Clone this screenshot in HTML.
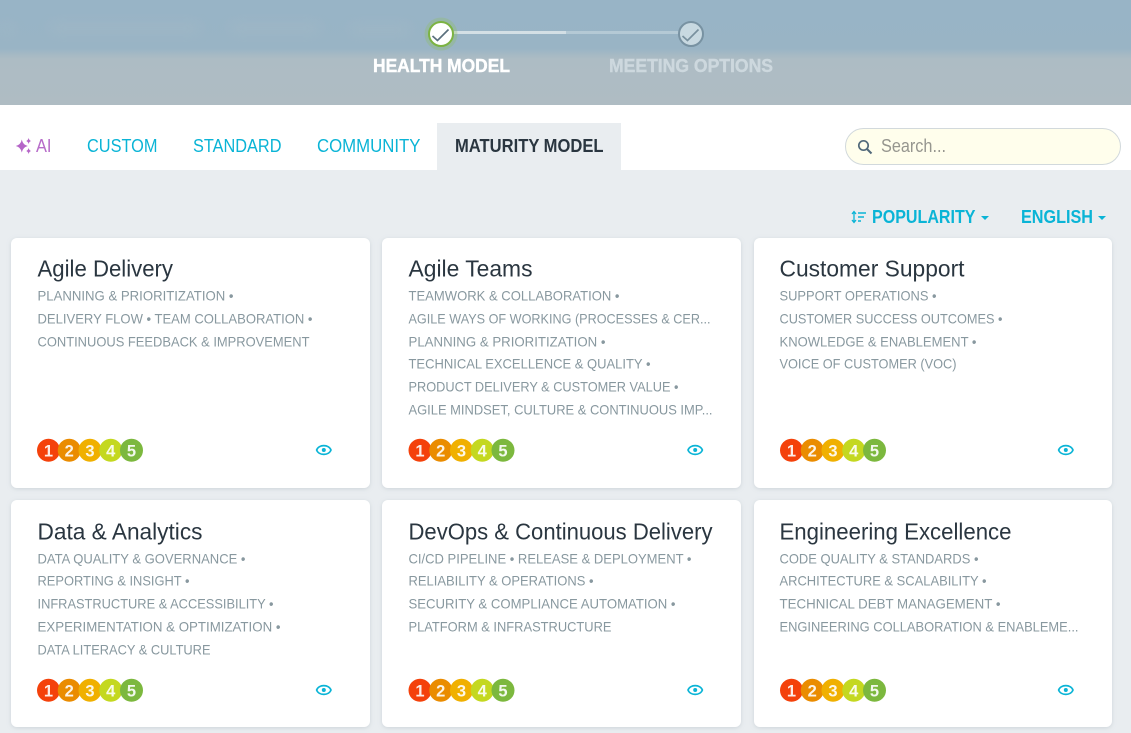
<!DOCTYPE html>
<html lang="en"><head><meta charset="utf-8"><title>Health Model</title>
<style>
html,body{margin:0;padding:0;background:#e9edf0;width:1131px;height:733px;overflow:hidden}
svg{display:block;font-family:"Liberation Sans",sans-serif}
.t{font-size:23.5px;fill:#2a3640}
.s{font-size:14px;fill:#88989f}
.n{font-size:16.5px;font-weight:bold;fill:#fff;text-anchor:middle;opacity:.9}
.c{fill:#0ab4d6}
.e{fill:none;stroke:#0ab4d6;stroke-width:1.7}
</style></head><body>
<svg width="1131" height="733" viewBox="0 0 1131 733" xmlns="http://www.w3.org/2000/svg">
<defs>
<linearGradient id="hg" x1="0" y1="0" x2="0" y2="1"><stop offset="0" stop-color="#98b4c6"/><stop offset=".46" stop-color="#99b4c5"/><stop offset=".56" stop-color="#adbcc4"/><stop offset="1" stop-color="#afbcc3"/></linearGradient>
<filter id="b" x="-10%" y="-100%" width="120%" height="300%"><feGaussianBlur stdDeviation="7"/></filter>
<filter id="sh" x="-5%" y="-5%" width="110%" height="110%"><feDropShadow dx="0" dy="1" stdDeviation="2" flood-color="#8a9aa5" flood-opacity=".3"/></filter>
</defs>
<rect width="1131" height="733" fill="#e9edf0"/>
<rect width="1131" height="105" fill="url(#hg)"/>
<g filter="url(#b)" fill="#a9bcc6" opacity=".45">
<rect x="50" y="24" width="150" height="9"/><rect x="230" y="24" width="90" height="9"/><rect x="0" y="26" width="14" height="8"/>
<rect x="350" y="26" width="60" height="8"/>
</g>
<!-- stepper -->
<rect x="452" y="31" width="114" height="3" fill="#d3dfe5"/>
<rect x="566" y="31" width="114" height="3" fill="#b4c9d5"/>
<circle cx="441" cy="34" r="16.5" fill="#8fbf5e" opacity=".3"/>
<circle cx="441" cy="34" r="12" fill="#fff" stroke="#7cb342" stroke-width="2"/>
<path d="M432.500 36 L437.500 40.500 L448.500 29.500" fill="none" stroke="#5a6f7d" stroke-width="1.700"/>
<circle cx="691" cy="34" r="12" fill="#c8d9e1" stroke="#7892a2" stroke-width="2"/>
<path d="M682.500 36 L687.500 40.500 L698.500 29.500" fill="none" stroke="#78909e" stroke-width="1.700"/>
<text x="373" y="72" font-size="18" font-weight="bold" fill="#fff" stroke="#fff" stroke-width=".4" textLength="137" lengthAdjust="spacingAndGlyphs">HEALTH MODEL</text>
<text x="609" y="72" font-size="18" font-weight="bold" fill="#cdd8de" stroke="#cdd8de" stroke-width=".4" textLength="164" lengthAdjust="spacingAndGlyphs">MEETING OPTIONS</text>
<!-- tabs -->
<rect y="105" width="1131" height="65" fill="#fff"/>
<rect x="437" y="123" width="184" height="47" fill="#e9edf0"/>
<path d="M21.800 139.500 Q22.800 144.800 27.800 146 Q22.800 147.200 21.800 152.500 Q20.800 147.200 15.800 146 Q20.800 144.800 21.800 139.500Z M28.600 137.800 Q29 140.300 31 141 Q29 141.700 28.600 144.200 Q28.200 141.700 26.200 141 Q28.200 140.300 28.600 137.800Z M28.600 147.800 Q29 150.300 31 151 Q29 151.700 28.600 154.200 Q28.200 151.700 26.200 151 Q28.200 150.300 28.600 147.800Z" fill="#b565c8"/>
<text x="36" y="152" font-size="18" fill="#b76cc9" textLength="15.500" lengthAdjust="spacingAndGlyphs">AI</text>
<text x="87" y="152" font-size="18" class="c" textLength="70.500" lengthAdjust="spacingAndGlyphs">CUSTOM</text>
<text x="193" y="152" font-size="18" class="c" textLength="88.500" lengthAdjust="spacingAndGlyphs">STANDARD</text>
<text x="317" y="152" font-size="18" class="c" textLength="103.500" lengthAdjust="spacingAndGlyphs">COMMUNITY</text>
<text x="455" y="152" font-size="18" font-weight="bold" fill="#2a3640" textLength="148.500" lengthAdjust="spacingAndGlyphs">MATURITY MODEL</text>
<!-- search -->
<rect x="845.500" y="128.500" width="275" height="36" rx="18" fill="#fffeec" stroke="#d2d9dc"/>
<circle cx="863.500" cy="145.500" r="4.700" fill="none" stroke="#51697a" stroke-width="1.700"/>
<path d="M867 149 L871.500 153.500" stroke="#51697a" stroke-width="2" fill="none"/>
<text x="881" y="152" font-size="18" fill="#96968f" textLength="65" lengthAdjust="spacingAndGlyphs">Search...</text>
<!-- sort -->
<path d="M854 212 V222 M852 214 L854 211.500 L856 214 M852 220 L854 222.500 L856 220" fill="none" stroke="#0ab4d6" stroke-width="1.300"/>
<path d="M858 213 H866 M858 217 H864 M858 221 H861" stroke="#0ab4d6" stroke-width="1.500"/>
<text x="872" y="223" font-size="18" font-weight="bold" class="c" textLength="103.500" lengthAdjust="spacingAndGlyphs">POPULARITY</text>
<path d="M981 216 H989 L985 220Z" class="c"/>
<text x="1021" y="223" font-size="18" font-weight="bold" class="c" textLength="72" lengthAdjust="spacingAndGlyphs">ENGLISH</text>
<path d="M1098 216 H1106 L1102 220Z" class="c"/>
<!-- cards -->
<g fill="#fff" filter="url(#sh)">
<rect x="11" y="238" width="359" height="250" rx="6"/>
<rect x="382" y="238" width="359" height="250" rx="6"/>
<rect x="754" y="238" width="358" height="250" rx="6"/>
<rect x="11" y="500" width="359" height="227" rx="6"/>
<rect x="382" y="500" width="359" height="227" rx="6"/>
<rect x="754" y="500" width="358" height="227" rx="6"/>
</g>
<g transform="translate(-.5,-.5)">
<!-- titles -->
<text class="t" x="38" y="277" textLength="135.500" lengthAdjust="spacingAndGlyphs">Agile Delivery</text>
<text class="t" x="409" y="277" textLength="124" lengthAdjust="spacingAndGlyphs">Agile Teams</text>
<text class="t" x="780" y="277" textLength="185" lengthAdjust="spacingAndGlyphs">Customer Support</text>
<text class="t" x="38" y="540" textLength="165" lengthAdjust="spacingAndGlyphs">Data &amp; Analytics</text>
<text class="t" x="409" y="540" textLength="304" lengthAdjust="spacingAndGlyphs">DevOps &amp; Continuous Delivery</text>
<text class="t" x="780" y="540" textLength="232" lengthAdjust="spacingAndGlyphs">Engineering Excellence</text>
<!-- card 1 -->
<text class="s" x="38" y="301" textLength="196" lengthAdjust="spacingAndGlyphs">PLANNING &amp; PRIORITIZATION •</text>
<text class="s" x="38" y="324" textLength="275" lengthAdjust="spacingAndGlyphs">DELIVERY FLOW • TEAM COLLABORATION •</text>
<text class="s" x="38" y="347" textLength="272" lengthAdjust="spacingAndGlyphs">CONTINUOUS FEEDBACK &amp; IMPROVEMENT</text>
<!-- card 2 -->
<text class="s" x="409" y="301" textLength="211" lengthAdjust="spacingAndGlyphs">TEAMWORK &amp; COLLABORATION •</text>
<text class="s" x="409" y="324" textLength="302" lengthAdjust="spacingAndGlyphs">AGILE WAYS OF WORKING (PROCESSES &amp; CER...</text>
<text class="s" x="409" y="347" textLength="197" lengthAdjust="spacingAndGlyphs">PLANNING &amp; PRIORITIZATION •</text>
<text class="s" x="409" y="369" textLength="242" lengthAdjust="spacingAndGlyphs">TECHNICAL EXCELLENCE &amp; QUALITY •</text>
<text class="s" x="409" y="392" textLength="270" lengthAdjust="spacingAndGlyphs">PRODUCT DELIVERY &amp; CUSTOMER VALUE •</text>
<text class="s" x="409" y="415" textLength="304" lengthAdjust="spacingAndGlyphs">AGILE MINDSET, CULTURE &amp; CONTINUOUS IMP...</text>
<!-- card 3 -->
<text class="s" x="780" y="301" textLength="157" lengthAdjust="spacingAndGlyphs">SUPPORT OPERATIONS •</text>
<text class="s" x="780" y="324" textLength="223" lengthAdjust="spacingAndGlyphs">CUSTOMER SUCCESS OUTCOMES •</text>
<text class="s" x="780" y="347" textLength="197" lengthAdjust="spacingAndGlyphs">KNOWLEDGE &amp; ENABLEMENT •</text>
<text class="s" x="780" y="369" textLength="177" lengthAdjust="spacingAndGlyphs">VOICE OF CUSTOMER (VOC)</text>
<!-- card 4 -->
<text class="s" x="38" y="564" textLength="208" lengthAdjust="spacingAndGlyphs">DATA QUALITY &amp; GOVERNANCE •</text>
<text class="s" x="38" y="586" textLength="152" lengthAdjust="spacingAndGlyphs">REPORTING &amp; INSIGHT •</text>
<text class="s" x="38" y="609" textLength="236" lengthAdjust="spacingAndGlyphs">INFRASTRUCTURE &amp; ACCESSIBILITY •</text>
<text class="s" x="38" y="632" textLength="243" lengthAdjust="spacingAndGlyphs">EXPERIMENTATION &amp; OPTIMIZATION •</text>
<text class="s" x="38" y="655" textLength="173" lengthAdjust="spacingAndGlyphs">DATA LITERACY &amp; CULTURE</text>
<!-- card 5 -->
<text class="s" x="409" y="564" textLength="283" lengthAdjust="spacingAndGlyphs">CI/CD PIPELINE • RELEASE &amp; DEPLOYMENT •</text>
<text class="s" x="409" y="586" textLength="185" lengthAdjust="spacingAndGlyphs">RELIABILITY &amp; OPERATIONS •</text>
<text class="s" x="409" y="609" textLength="267" lengthAdjust="spacingAndGlyphs">SECURITY &amp; COMPLIANCE AUTOMATION •</text>
<text class="s" x="409" y="632" textLength="203" lengthAdjust="spacingAndGlyphs">PLATFORM &amp; INFRASTRUCTURE</text>
<!-- card 6 -->
<text class="s" x="780" y="564" textLength="199" lengthAdjust="spacingAndGlyphs">CODE QUALITY &amp; STANDARDS •</text>
<text class="s" x="780" y="586" textLength="207" lengthAdjust="spacingAndGlyphs">ARCHITECTURE &amp; SCALABILITY •</text>
<text class="s" x="780" y="609" textLength="221" lengthAdjust="spacingAndGlyphs">TECHNICAL DEBT MANAGEMENT •</text>
<text class="s" x="780" y="632" textLength="299" lengthAdjust="spacingAndGlyphs">ENGINEERING COLLABORATION &amp; ENABLEME...</text>
</g>
<!-- badges row 1 -->
<g>
<circle cx="48.500" cy="450.300" r="11.500" fill="#f4410b"/><text class="n" x="48.500" y="456.300">1</text>
<circle cx="69.250" cy="450.300" r="11.500" fill="#ea8c00"/><text class="n" x="69.250" y="456.300">2</text>
<circle cx="90" cy="450.300" r="11.500" fill="#f0b000"/><text class="n" x="90" y="456.300">3</text>
<circle cx="110.750" cy="450.300" r="11.500" fill="#c4d820"/><text class="n" x="110.750" y="456.300">4</text>
<circle cx="131.500" cy="450.300" r="11.500" fill="#7cb83e"/><text class="n" x="131.500" y="456.300">5</text>
</g>
<g transform="translate(371.500,0)">
<circle cx="48.500" cy="450.300" r="11.500" fill="#f4410b"/><text class="n" x="48.500" y="456.300">1</text>
<circle cx="69.250" cy="450.300" r="11.500" fill="#ea8c00"/><text class="n" x="69.250" y="456.300">2</text>
<circle cx="90" cy="450.300" r="11.500" fill="#f0b000"/><text class="n" x="90" y="456.300">3</text>
<circle cx="110.750" cy="450.300" r="11.500" fill="#c4d820"/><text class="n" x="110.750" y="456.300">4</text>
<circle cx="131.500" cy="450.300" r="11.500" fill="#7cb83e"/><text class="n" x="131.500" y="456.300">5</text>
</g>
<g transform="translate(743,0)">
<circle cx="48.500" cy="450.300" r="11.500" fill="#f4410b"/><text class="n" x="48.500" y="456.300">1</text>
<circle cx="69.250" cy="450.300" r="11.500" fill="#ea8c00"/><text class="n" x="69.250" y="456.300">2</text>
<circle cx="90" cy="450.300" r="11.500" fill="#f0b000"/><text class="n" x="90" y="456.300">3</text>
<circle cx="110.750" cy="450.300" r="11.500" fill="#c4d820"/><text class="n" x="110.750" y="456.300">4</text>
<circle cx="131.500" cy="450.300" r="11.500" fill="#7cb83e"/><text class="n" x="131.500" y="456.300">5</text>
</g>
<!-- badges row 2 -->
<g transform="translate(0,240)">
<circle cx="48.500" cy="450.300" r="11.500" fill="#f4410b"/><text class="n" x="48.500" y="456.300">1</text>
<circle cx="69.250" cy="450.300" r="11.500" fill="#ea8c00"/><text class="n" x="69.250" y="456.300">2</text>
<circle cx="90" cy="450.300" r="11.500" fill="#f0b000"/><text class="n" x="90" y="456.300">3</text>
<circle cx="110.750" cy="450.300" r="11.500" fill="#c4d820"/><text class="n" x="110.750" y="456.300">4</text>
<circle cx="131.500" cy="450.300" r="11.500" fill="#7cb83e"/><text class="n" x="131.500" y="456.300">5</text>
</g>
<g transform="translate(371.500,240)">
<circle cx="48.500" cy="450.300" r="11.500" fill="#f4410b"/><text class="n" x="48.500" y="456.300">1</text>
<circle cx="69.250" cy="450.300" r="11.500" fill="#ea8c00"/><text class="n" x="69.250" y="456.300">2</text>
<circle cx="90" cy="450.300" r="11.500" fill="#f0b000"/><text class="n" x="90" y="456.300">3</text>
<circle cx="110.750" cy="450.300" r="11.500" fill="#c4d820"/><text class="n" x="110.750" y="456.300">4</text>
<circle cx="131.500" cy="450.300" r="11.500" fill="#7cb83e"/><text class="n" x="131.500" y="456.300">5</text>
</g>
<g transform="translate(743,240)">
<circle cx="48.500" cy="450.300" r="11.500" fill="#f4410b"/><text class="n" x="48.500" y="456.300">1</text>
<circle cx="69.250" cy="450.300" r="11.500" fill="#ea8c00"/><text class="n" x="69.250" y="456.300">2</text>
<circle cx="90" cy="450.300" r="11.500" fill="#f0b000"/><text class="n" x="90" y="456.300">3</text>
<circle cx="110.750" cy="450.300" r="11.500" fill="#c4d820"/><text class="n" x="110.750" y="456.300">4</text>
<circle cx="131.500" cy="450.300" r="11.500" fill="#7cb83e"/><text class="n" x="131.500" y="456.300">5</text>
</g>
<!-- eyes -->
<g transform="translate(323.800,450)"><path class="e" d="M-7.200 0 C-5 -5.800 5 -5.800 7.200 0 C5 5.800 -5 5.800 -7.200 0Z"/><circle r="2" class="c"/></g>
<g transform="translate(695.200,450)"><path class="e" d="M-7.200 0 C-5 -5.800 5 -5.800 7.200 0 C5 5.800 -5 5.800 -7.200 0Z"/><circle r="2" class="c"/></g>
<g transform="translate(1065.800,450)"><path class="e" d="M-7.200 0 C-5 -5.800 5 -5.800 7.200 0 C5 5.800 -5 5.800 -7.200 0Z"/><circle r="2" class="c"/></g>
<g transform="translate(323.800,690)"><path class="e" d="M-7.200 0 C-5 -5.800 5 -5.800 7.200 0 C5 5.800 -5 5.800 -7.200 0Z"/><circle r="2" class="c"/></g>
<g transform="translate(695.200,690)"><path class="e" d="M-7.200 0 C-5 -5.800 5 -5.800 7.200 0 C5 5.800 -5 5.800 -7.200 0Z"/><circle r="2" class="c"/></g>
<g transform="translate(1065.800,690)"><path class="e" d="M-7.200 0 C-5 -5.800 5 -5.800 7.200 0 C5 5.800 -5 5.800 -7.200 0Z"/><circle r="2" class="c"/></g>
</svg>
</body></html>
